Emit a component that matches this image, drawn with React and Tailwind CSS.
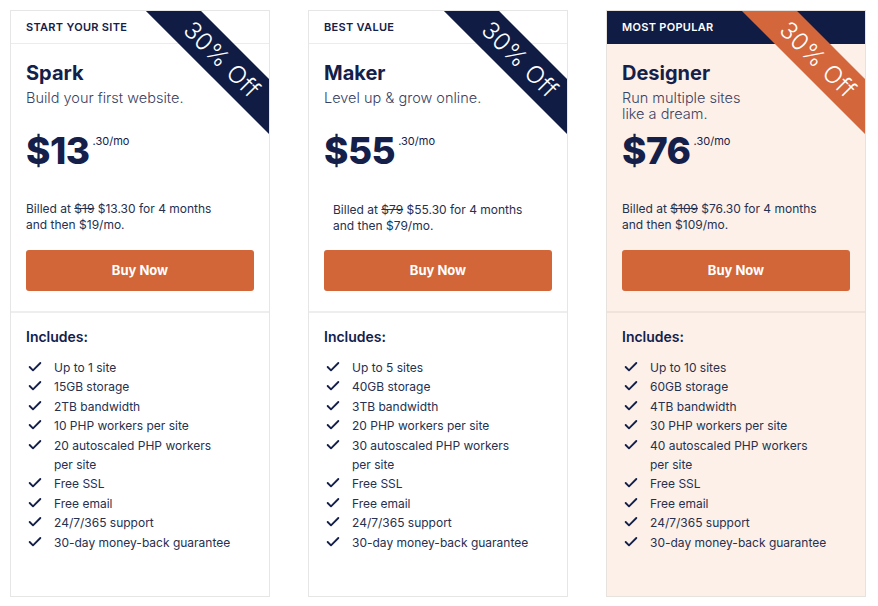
import { Check } from "lucide-react";

const plans = [
    {
        label: "Start your site",
        name: "Spark",
        desc: ["Build your first website."],
        price: "13",
        old: "$19",
        now: "$13.30",
        after: "$19/mo.",
        features: [
            "Up to 1 site",
            "15GB storage",
            "2TB bandwidth",
            "10 PHP workers per site",
            ["20 autoscaled PHP workers", "per site"],
            "Free SSL",
            "Free email",
            "24/7/365 support",
            "30-day money-back guarantee",
        ],
    },
    {
        label: "Best value",
        name: "Maker",
        desc: ["Level up & grow online."],
        price: "55",
        old: "$79",
        now: "$55.30",
        after: "$79/mo.",
        indent: true,
        features: [
            "Up to 5 sites",
            "40GB storage",
            "3TB bandwidth",
            "20 PHP workers per site",
            ["30 autoscaled PHP workers", "per site"],
            "Free SSL",
            "Free email",
            "24/7/365 support",
            "30-day money-back guarantee",
        ],
    },
    {
        label: "Most popular",
        name: "Designer",
        desc: ["Run multiple sites", "like a dream."],
        price: "76",
        old: "$109",
        now: "$76.30",
        after: "$109/mo.",
        popular: true,
        features: [
            "Up to 10 sites",
            "60GB storage",
            "4TB bandwidth",
            "30 PHP workers per site",
            ["40 autoscaled PHP workers", "per site"],
            "Free SSL",
            "Free email",
            "24/7/365 support",
            "30-day money-back guarantee",
        ],
    },
];

function PlanCard({ plan }) {
    const { popular } = plan;

    return (
        <div
            className={`relative overflow-hidden w-[260px] h-[587px] flex flex-col border ${
                popular ? "bg-[#fdf0e8] border-[#e8e2de]" : "bg-white border-[#e6e6e6]"
            }`}
        >
            {/* Ribbon */}
            <div
                className={`absolute left-[101px] top-[29px] w-[220px] h-[39px] rotate-45 flex items-center justify-center text-white text-[24px] font-light tracking-[0.5px] ${
                    popular ? "bg-[#d3663a]" : "bg-[#111c44]"
                }`}
            >
                30% Off
            </div>

            {/* Header */}
            <div
                className={`h-[33px] shrink-0 flex items-center px-[15px] text-[11px] font-semibold uppercase tracking-[0.3px] ${
                    popular ? "bg-[#111c44] text-white" : "border-b border-[#ececec] text-[#14204a]"
                }`}
            >
                {plan.label}
            </div>

            {/* Top section */}
            <div className={`px-[15px] pb-[20px] border-b-2 ${popular ? "border-[#efe3dc]" : "border-[#eeeeee]"}`}>
                <h2 className="mt-[17px] text-[20px] leading-[24px] font-bold text-[#14204a]">{plan.name}</h2>
                <div className="mt-[5px] h-[40px] text-[14.5px] leading-[16px] font-light text-[#3a4262]">
                    {plan.desc.map((d) => (
                        <div key={d}>{d}</div>
                    ))}
                </div>
                <div className="mt-[3px] flex items-start text-[#14204a]">
                    <span className="text-[37px] leading-[36px] font-extrabold tracking-[-0.5px]">${plan.price}</span>
                    <span className="ml-[3px] mt-[1px] text-[11px] leading-[14px]">.30/mo</span>
                </div>
                <div className={`mt-[32px] text-[12px] leading-[16px] text-[#26304f] ${plan.indent ? "pl-[9px] pt-[1px]" : ""}`}>
                    Billed at <span className="line-through">{plan.old}</span> {plan.now} for 4 months
                    <br />
                    and then {plan.after}
                </div>
                <button
                    className={`w-full h-[41px] rounded-[3px] bg-[#d26639] text-white text-[13px] font-bold ${
                        plan.indent ? "mt-[16px]" : "mt-[17px]"
                    }`}
                >
                    Buy Now
                </button>
            </div>

            {/* Includes */}
            <div className="px-[15px] pt-[14px]">
                <div className="text-[14px] leading-[20px] font-semibold text-[#14204a]">Includes:</div>
                <ul className="mt-[11px] text-[12px] leading-[19.4px] text-[#26304f]">
                    {plan.features.map((f) => {
                        const lines = Array.isArray(f) ? f : [f];
                        return (
                            <li key={lines[0]} className="flex items-start">
                                <Check
                                    className="mt-[1px] ml-[1px] w-[16px] h-[16px] shrink-0 text-[#14204a]"
                                    strokeWidth={2.8}
                                />
                                <span className="ml-[11px] whitespace-nowrap">
                                    {lines.map((l, i) => (
                                        <span key={l}>
                                            {i > 0 && <br />}
                                            {l}
                                        </span>
                                    ))}
                                </span>
                            </li>
                        );
                    })}
                </ul>
            </div>
        </div>
    );
}

export default function App() {
    return (
        <div className="min-h-screen bg-white pt-[10px] pl-[10px] flex gap-[38px] font-['Inter',sans-serif] antialiased">
            {plans.map((p) => (
                <PlanCard key={p.name} plan={p} />
            ))}
        </div>
    );
}
